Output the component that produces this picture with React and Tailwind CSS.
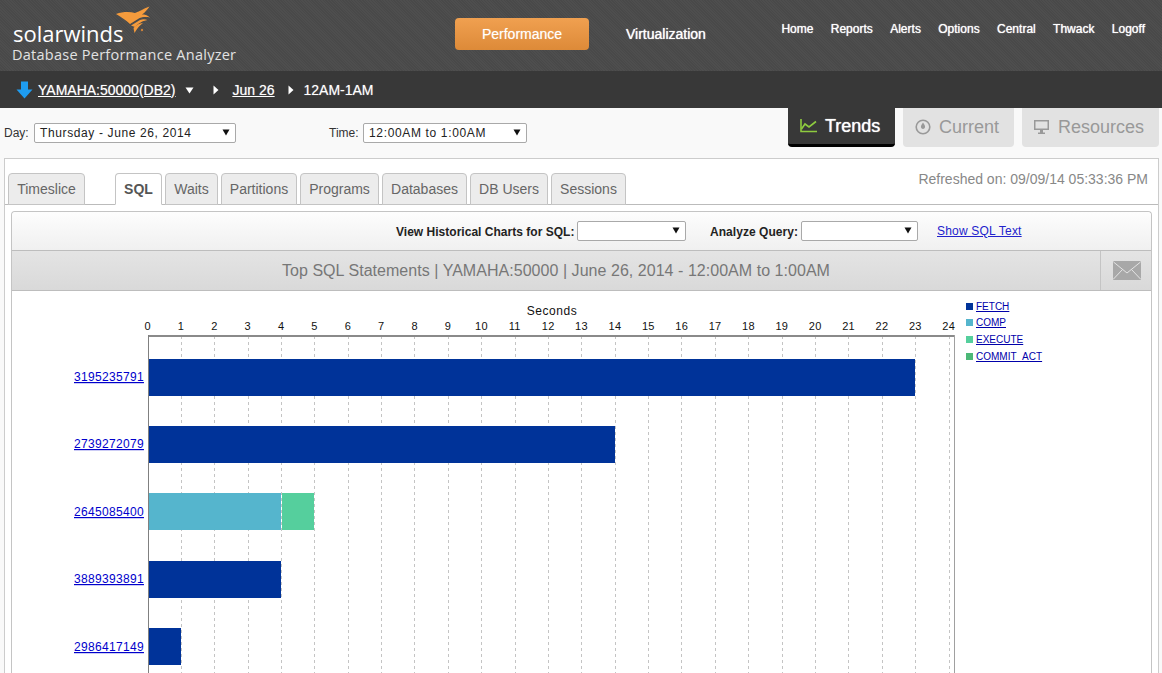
const tabs = [
  ["Timeslice", "w-[77px] mr-[27px]"],
  ["SQL", "w-[47px]"],
  ["Waits", "w-[53px]"],
  ["Partitions", "w-[76px]"],
  ["Programs", "w-[79px]"],
  ["Databases", "w-[85px]"],
  ["DB Users", "w-[78px]"],
  ["Sessions", "w-[75px]"],
];
const navItems = ["Home", "Reports", "Alerts", "Options", "Central", "Thwack", "Logoff"];
const ticks = Array.from({ length: 25 }, (_, i) => i);
const X = (v) => 147.4 + v * 33.38;
const R = (v) => Math.round(X(v));
const rows = [
  { id: "3195235791", y: 359, dy: 22, parts: [[0, 23, "#003399"]] },
  { id: "2739272079", y: 426, dy: 22, parts: [[0, 14, "#003399"]] },
  { id: "2645085400", y: 493, dy: 23, parts: [[0, 4, "#55b5cd"], [4, 5, "#55cf9d"]] },
  { id: "3889393891", y: 561, dy: 22, parts: [[0, 4, "#003399"]] },
  { id: "2986417149", y: 628, dy: 23, parts: [[0, 1, "#003399"]] },
];
const legend = [
  ["FETCH", "#003399"],
  ["COMP", "#55b5cd"],
  ["EXECUTE", "#55cf9d"],
  ["COMMIT_ACT", "#4cb877"],
];

function Flame() {
  return (
    <svg width="38" height="30" viewBox="114 4 38 30" className="shrink-0">
      <path d="M117 14 C124 11.5 131 11.5 136 13 C140 11.5 144 9 150.5 6.5 C148 10 146 12.5 143 14.5 C146 14.5 148 15 151 17.5 C146 16.5 142 17 139 19 L131 24 C127 20 122 17 117 14 Z" fill="#f59b3c" />
      <path d="M132 25.5 L141 20 C143.5 19 146 19 148.5 20 C143 21 140 23 136 27 Z" fill="#f59b3c" />
      <path d="M134.5 28 C137 25 140 23.5 144 23 C140 26 138 28.5 135.5 33 Z" fill="#f59b3c" />
      <circle cx="143" cy="30" r="1.2" fill="#c9803c" />
    </svg>
  );
}

function Select({ w, text, tracking = "tracking-[0.62px]" }) {
  return (
    <div className={`${w} h-[20px] bg-white border border-[#a9a9a9] rounded-[2px] flex items-center justify-between pl-[5px] pr-[5px] text-[12px] ${tracking} text-[#222]`}>
      <span className="whitespace-nowrap">{text}</span>
      <svg width="8" height="7" viewBox="0 0 8 7" className="shrink-0 -mt-[2px]"><path d="M0.5 0.5 H7.5 L4 6.5 Z" fill="#111" /></svg>
    </div>
  );
}

function Caret() {
  return <svg width="6" height="10" viewBox="0 0 6 10" className="block"><path d="M0.5 0.5 L5.5 5 L0.5 9.5 Z" fill="#fff" /></svg>;
}

export default function App() {
  return (
    <div className="h-[673px] w-[1162px] overflow-hidden bg-[#f9f9f9] font-['Liberation_Sans',Arial,sans-serif]">
      <header className="h-[71px] bg-[repeating-linear-gradient(45deg,#494949_0,#494949_1px,#4e4e4e_1px,#4e4e4e_2px)] flex relative">
        <div className="w-[455px] shrink-0 pl-[12px] pt-[7px] relative">
          <div className="h-[38px] flex items-end">
            <span className="font-['Open_Sans',sans-serif] text-[22px] leading-[24px] text-white ml-[1px]">solarwinds</span>
            <span className="absolute left-[113px] top-[4px]"><Flame /></span>
          </div>
          <div className="font-['Open_Sans',sans-serif] text-[14.5px] leading-[20px] text-[#e2e2e2] tracking-[0.25px] whitespace-nowrap">Database Performance Analyzer</div>
        </div>
        <div className="pt-[18px] flex items-start">
          <div className="w-[134px] h-[32px] rounded-[4px] bg-gradient-to-b from-[#f0a050] to-[#dd8a38] flex items-center justify-center text-white text-[14px] [text-shadow:0_0_1px_#fff8]">Performance</div>
          <div className="ml-[37px] h-[32px] flex items-center text-white text-[14px] [text-shadow:0_0_1px_#fff]">Virtualization</div>
        </div>
        <nav className="ml-auto pr-[17px] pt-[21px] flex items-start gap-[17.4px]">
          {navItems.map((n) => (
            <span key={n} className="text-white text-[12px] leading-[16px] [text-shadow:0_0_1px_#fff]">{n}</span>
          ))}
        </nav>
      </header>

      <div className="h-[37px] bg-[#383838] flex items-center text-white text-[14px] pl-[16px]">
        <svg width="17" height="18" viewBox="0 0 17 18" className="shrink-0"><path d="M5 0.5 H12 V8.5 H16.5 L8.5 17.5 L0.5 8.5 H5 Z" fill="#1e9cf0" /></svg>
        <span className="ml-[5px] mt-[1px] underline [text-shadow:0_0_1px_#fff8]">YAMAHA:50000(DB2)</span>
        <svg width="9" height="7" viewBox="0 0 9 7" className="ml-[10px] mt-[2px]"><path d="M0.5 0.5 H8.5 L4.5 6.5 Z" fill="#fff" /></svg>
        <span className="ml-[19px] mt-[1px]"><Caret /></span>
        <span className="ml-[13px] mt-[1px] underline [text-shadow:0_0_1px_#fff8]">Jun 26</span>
        <span className="ml-[13px] mt-[1px]"><Caret /></span>
        <span className="ml-[10px] mt-[1px] [text-shadow:0_0_1px_#fff8]">12AM-1AM</span>
      </div>

      <div className="h-[50px] flex items-start relative">
        <div className="flex items-center pt-[15px] pl-[4px] text-[12px] text-[#333]">
          <span className="w-[30px]">Day:</span>
          <Select w="w-[202px]" text="Thursday - June 26, 2014" />
          <span className="ml-[93px] w-[34px]">Time:</span>
          <Select w="w-[164px]" text="12:00AM to 1:00AM" tracking="tracking-[0.65px]" />
        </div>
        <div className="ml-auto pr-[3px] flex gap-[8px] text-[18px] leading-none">
          <div className="w-[107px] h-[39px] bg-[#383838] border-b-[3px] border-black rounded-b-[4px] flex items-center pl-[12px] gap-[8px] text-white [text-shadow:0_0_1px_#fff]">
            <svg width="17" height="14" viewBox="0 0 17 14" fill="none" stroke="#8ecb3f" strokeWidth="1.6"><path d="M1 0 V12.5 H17" /><path d="M1.5 10 L5 5 L9 8 L16 2.5" /></svg>
            Trends
          </div>
          <div className="w-[111px] h-[39px] pb-[2px] bg-[#e2e2e2] rounded-b-[4px] flex items-center pl-[12px] gap-[8px] text-[#999]">
            <svg width="16" height="16" viewBox="0 0 16 16" fill="none"><circle cx="8" cy="8" r="6.8" stroke="#999" strokeWidth="1.6" /><path d="M6 7 C6.5 5.5 7.5 4.5 8 3.5 C8.5 4.5 9.5 5.5 10 7 C10.5 9 9 10 8 10 C7 10 5.5 9 6 7 Z" fill="#999" /></svg>
            Current
          </div>
          <div className="w-[137px] h-[39px] pb-[2px] bg-[#e2e2e2] rounded-b-[4px] flex items-center pl-[12px] gap-[9px] text-[#999]">
            <svg width="15" height="16" viewBox="0 0 15 16" fill="#999"><path d="M0 1 H15 V11 H0 Z M1.5 2.5 V9.5 H13.5 V2.5 Z" fillRule="evenodd" /><path d="M6 11 H9 V13.5 H11 V15 H4 V13.5 H6 Z" /></svg>
            Resources
          </div>
        </div>
      </div>

      <main className="mx-[4px] w-[1155px] h-[600px] bg-white border border-[#ccc] border-b-0">
        <div className="h-[46px] flex items-end justify-between border-b border-[#bbb] pl-[3px]">
          <div className="flex gap-[3px] -mb-px">
            {tabs.map(([t, cls]) => (
              <div
                key={t}
                className={`${cls} h-[32px] flex items-center justify-center text-[14px] rounded-t-[4px] border border-[#c4c4c4] ${t === "SQL" ? "bg-white border-b-white font-bold text-[#555]" : "bg-[#ececec] text-[#666]"}`}
              >
                {t}
              </div>
            ))}
          </div>
          <div className="self-start pt-[10px] pr-[10px] text-[14px] text-[#888]">Refreshed on: 09/09/14 05:33:36 PM</div>
        </div>

        <section className="mt-[6px] mx-[6px] w-[1141px] h-[480px] border border-[#c4c4c4] border-b-0 rounded-t-[4px] bg-white">
          <div className="h-[39px] rounded-t-[4px] bg-gradient-to-b from-[#fdfdfd] to-[#f0f0f0] border-b border-[#bdbdbd] flex items-center pl-[384px] text-[12px]">
            <span className="mt-[1px] font-bold text-[#222] tracking-[0.02px] w-[181px] whitespace-nowrap">View Historical Charts for SQL:</span>
            <Select w="w-[109px]" text="" />
            <span className="mt-[1px] ml-[24px] w-[91px] font-bold text-[#222] tracking-[0.04px] whitespace-nowrap">Analyze Query:</span>
            <Select w="w-[117px]" text="" />
            <span className="ml-[19px] text-[#2222cc] underline tracking-[0.2px]">Show SQL Text</span>
          </div>
          <div className="h-[40px] bg-gradient-to-b from-[#e4e4e4] to-[#d9d9d9] border-b border-[#bdbdbd] flex">
            <div className="flex-1 flex items-center justify-center text-[16px] tracking-[0.04px] text-[#777]">Top SQL Statements | YAMAHA:50000 | June 26, 2014 - 12:00AM to 1:00AM</div>
            <div className="w-[51px] pl-[2px] border-l border-[#c4c4c4] flex items-center justify-center">
              <svg width="28" height="19" viewBox="0 0 28 19"><rect width="28" height="19" rx="1" fill="#a8a8a8" /><path d="M0.5 1 L14 12 L27.5 1 M0.5 18 L9.5 8.5 M27.5 18 L18.5 8.5" fill="none" stroke="#e4e4e4" strokeWidth="1" /></svg>
            </div>
          </div>

          <div className="flex">
            <svg width="948" height="382" viewBox="12 291 948 382" className="block shrink-0" style={{ fontFamily: "'Liberation Sans', Arial, sans-serif" }}>
              <text x="552" y="315" textAnchor="middle" fontSize="12" letterSpacing="0.55" fill="#111">Seconds</text>
              {ticks.map((t) => (
                <g key={t}>
                  <text x={X(t) + 0.2} y="330" textAnchor="middle" fontSize="11" letterSpacing="0.3" fill="#111">{t}</text>
                  {t > 0 && <line x1={R(t) + 0.5} x2={R(t) + 0.5} y1="336" y2="673" stroke="#c4c4c4" strokeDasharray="3 3" />}
                </g>
              ))}
              <rect x="148" y="335" width="807" height="2" fill="#8a8a8a" />
              <rect x="148" y="335" width="1" height="338" fill="#808080" />
              <rect x="954" y="335" width="1" height="338" fill="#a0a0a0" />
              {rows.map((r) => (
                <g key={r.id}>
                  <text x="74" y={r.y + r.dy} fontSize="12" letterSpacing="0.32" fill="#0000cc" textDecoration="underline">{r.id}</text>
                  {r.parts.map(([a, b, c]) => {
                    const x0 = a ? R(a) + 1 : 149;
                    const isSplit = r.parts.length > 1 && a === 0;
                    const x1 = isSplit ? R(b) : R(b) + (r.parts.length === 1 ? 0 : 0);
                    return <rect key={a} x={x0} y={r.y} width={x1 - x0} height="37" fill={c} />;
                  })}
                </g>
              ))}
            </svg>
            <ul className="pl-[6px] pt-[7px] text-[10px]">
              {legend.map(([l, c]) => (
                <li key={l} className="h-[16.6px] flex items-center gap-[3px]">
                  <span className="w-[7px] h-[7px]" style={{ background: c }} />
                  <span className="text-[#0000aa] underline">{l}</span>
                </li>
              ))}
            </ul>
          </div>
        </section>
      </main>
    </div>
  );
}
